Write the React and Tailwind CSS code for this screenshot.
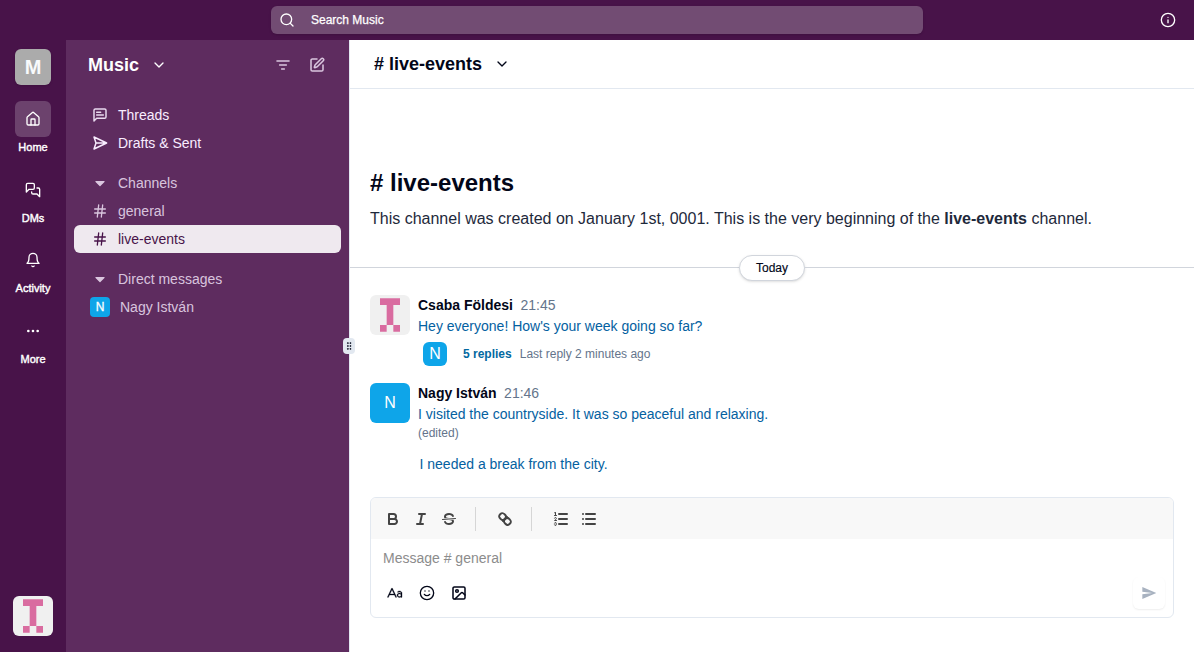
import React from "react";

const Icon = ({ children, className = "size-4", sw = 2 }) => (
  <svg viewBox="0 0 24 24" fill="none" stroke="currentColor" strokeWidth={sw} strokeLinecap="round" strokeLinejoin="round" className={`shrink-0 ${className}`}>
    {children}
  </svg>
);

const Chevron = ({ className }) => <Icon className={className}><path d="m6 9 6 6 6-6" /></Icon>;
const Hash = () => (
  <Icon><path d="M4 9h16M4 15h16M10 3 8 21M16 3l-2 18" /></Icon>
);
const Caret = () => (
  <svg viewBox="0 0 320 512" fill="currentColor" className="size-4 shrink-0">
    <path d="M31.3 192h257.3c17.8 0 26.7 21.5 14.1 34.1L174.1 354.8c-7.8 7.8-20.5 7.8-28.3 0L17.2 226.1C4.6 213.5 13.5 192 31.3 192z" />
  </svg>
);

const Identicon = () => (
  <svg viewBox="0 0 12 12" className="size-10 shrink-0 rounded-md bg-[#f0f0f0]" fill="#d96ca0">
    <path d="M3 1h6v2H7v6h2v2H7V9H5v2H3V9h2V3H3z" />
  </svg>
);

const QuillIcon = ({ children }) => (
  <span className="flex h-6 w-7 items-center justify-center">
    <svg viewBox="0 0 18 18" className="size-[18px]" fill="none" stroke="#444" strokeWidth="2" strokeLinecap="round" strokeLinejoin="round">
      {children}
    </svg>
  </span>
);

const railItems = [
  {
    label: "Home",
    active: true,
    icon: <Icon><path d="M15 21v-8a1 1 0 0 0-1-1h-4a1 1 0 0 0-1 1v8" /><path d="M3 10a2 2 0 0 1 .709-1.528l7-5.999a2 2 0 0 1 2.582 0l7 5.999A2 2 0 0 1 21 10v9a2 2 0 0 1-2 2H5a2 2 0 0 1-2-2z" /></Icon>,
  },
  {
    label: "DMs",
    icon: <Icon><path d="M14 9a2 2 0 0 1-2 2H6l-4 4V4a2 2 0 0 1 2-2h8a2 2 0 0 1 2 2z" /><path d="M18 9h2a2 2 0 0 1 2 2v11l-4-4h-6a2 2 0 0 1-2-2v-1" /></Icon>,
  },
  {
    label: "Activity",
    icon: <Icon><path d="M6 8a6 6 0 0 1 12 0c0 7 3 9 3 9H3s3-2 3-9" /><path d="M10.3 21a1.94 1.94 0 0 0 3.4 0" /></Icon>,
  },
  {
    label: "More",
    icon: <Icon><circle cx="12" cy="12" r="1" /><circle cx="19" cy="12" r="1" /><circle cx="5" cy="12" r="1" /></Icon>,
  },
];

function TopBar() {
  return (
    <header className="flex h-10 shrink-0 items-center bg-[#481349] text-white">
      <div className="w-[271px]" />
      <div className="flex h-7 w-[652px] items-center rounded-md bg-[#724c73] px-2 shadow-sm">
        <Icon className="mr-4 size-4"><circle cx="11" cy="11" r="8" /><path d="m21 21-4.3-4.3" /></Icon>
        <span className="text-xs [-webkit-text-stroke:0.25px_currentColor]">Search Music</span>
      </div>
      <div className="flex flex-1 justify-end pr-[18px]">
        <Icon><circle cx="12" cy="12" r="10" /><path d="M12 16v-4M12 8h.01" /></Icon>
      </div>
    </header>
  );
}

function Rail() {
  return (
    <aside className="flex w-[66px] shrink-0 flex-col items-center bg-[#481349] pt-[9px] pb-4 text-white">
      <div className="mb-4 flex size-9 items-center justify-center rounded-md bg-[#ababab] text-xl font-bold text-slate-50 shadow-sm">M</div>
      <nav className="flex flex-col gap-[16.5px]">
        {railItems.map((it) => (
          <div key={it.label} className="flex flex-col items-center gap-0.5">
            <div className={it.active ? "flex size-9 items-center justify-center rounded-md bg-[#6c426d]" : "flex size-9 items-center justify-center"}>{it.icon}</div>
            <span className="text-[11px] leading-4 [-webkit-text-stroke:0.4px_currentColor]">{it.label}</span>
          </div>
        ))}
      </nav>
      <div className="mt-auto"><Identicon /></div>
    </aside>
  );
}

const Row = ({ icon, children, className }) => (
  <div className={`flex h-7 items-center gap-2.5 rounded-md px-[18px] text-sm ${className}`}>
    {icon}
    <span>{children}</span>
  </div>
);

function Sidebar() {
  return (
    <aside className="flex w-[283px] shrink-0 flex-col bg-[#5e2c5f] px-2">
      <div className="flex h-[49px] items-center pl-[14px] pr-4 text-white">
        <span className="text-lg font-bold">Music</span>
        <Chevron className="ml-3 size-4" />
        <div className="ml-auto flex items-center gap-[18px] text-[#f9edffcc]">
          <Icon sw={2.4}><path d="M3 6h18M7 12h10M10 18h4" /></Icon>
          <Icon sw={2.3}><path d="M12 3H5a2 2 0 0 0-2 2v14a2 2 0 0 0 2 2h14a2 2 0 0 0 2-2v-7" /><path d="M18.375 2.625a1 1 0 0 1 3 3l-9.013 9.014a2 2 0 0 1-.853.505l-2.873.84a.5.5 0 0 1-.62-.62l.84-2.873a2 2 0 0 1 .506-.852z" /></Icon>
        </div>
      </div>
      <div className="mt-3 flex flex-col text-[#f9edff]">
        <Row icon={<Icon sw={2.2} className="size-4 opacity-90"><path d="M21 15a2 2 0 0 1-2 2H7l-4 4V5a2 2 0 0 1 2-2h14a2 2 0 0 1 2 2z" /><path d="M13 8H7M17 12H7" /></Icon>}>Threads</Row>
        <Row icon={<Icon sw={2.2}><path d="m3 3 3 9-3 9 19-9ZM6 12h16" /></Icon>}>Drafts &amp; Sent</Row>
      </div>
      <div className="mt-3 flex flex-col text-[#f9edffcc]">
        <Row icon={<Caret />}>Channels</Row>
        <Row icon={<Hash />}>general</Row>
        <Row icon={<Hash />} className="bg-[#efe9ef] text-[#481349]">live-events</Row>
      </div>
      <div className="mt-3 flex flex-col text-[#f9edffcc]">
        <Row icon={<Caret />}>Direct messages</Row>
        <div className="flex h-7 items-center gap-2.5 px-4 text-sm">
          <span className="flex size-5 items-center justify-center rounded bg-[#0ea5e9] text-xs text-white [-webkit-text-stroke:0.3px_currentColor]">N</span>
          <span>Nagy István</span>
        </div>
      </div>
    </aside>
  );
}

function ResizeHandle() {
  return (
    <div className="relative flex w-px shrink-0 items-center justify-center bg-slate-200">
      <div className="absolute -left-1.5 z-10 flex h-4 w-3 items-center justify-center rounded-sm bg-[#e2e8f0] text-slate-950">
        <Icon className="size-2.5"><circle cx="9" cy="12" r="1" /><circle cx="9" cy="5" r="1" /><circle cx="9" cy="19" r="1" /><circle cx="15" cy="12" r="1" /><circle cx="15" cy="5" r="1" /><circle cx="15" cy="19" r="1" /></Icon>
      </div>
    </div>
  );
}

function Messages() {
  return (
    <div className="flex flex-col">
      <div className="px-5 pt-[78px]">
        <h1 className="text-2xl font-bold">{"# live-events"}</h1>
        <p className="mt-2 text-base text-[#1e293b]">
          This channel was created on January 1st, 0001. This is the very beginning of the <strong>live-events</strong> channel.
        </p>
      </div>
      <div className="mt-6 flex items-center">
        <div className="mb-px h-px flex-1 bg-gray-300" />
        <span className="rounded-full border border-gray-300 bg-white px-4 py-1 text-xs shadow-sm [-webkit-text-stroke:0.15px_currentColor]">Today</span>
        <div className="mb-px h-px flex-1 bg-gray-300" />
      </div>
      <div className="mt-[14px] flex gap-2 px-5">
        <Identicon />
        <div>
          <div className="flex gap-[7.5px] text-sm">
            <span className="font-bold">Csaba Földesi</span>
            <span className="text-[#64748b]">21:45</span>
          </div>
          <p className="mt-px text-sm text-[#0461a1]">Hey everyone! How's your week going so far?</p>
          <div className="mt-1.5 ml-[5px] flex h-6 items-center text-xs">
            <span className="flex size-6 items-center justify-center rounded-md bg-[#0ea5e9] text-base text-white">N</span>
            <span className="ml-4 font-bold text-[#0369a1]">5 replies</span>
            <span className="ml-2 text-[#64748b]">Last reply 2 minutes ago</span>
          </div>
        </div>
      </div>
      <div className="mt-[17px] flex gap-2 px-5">
        <span className="flex size-10 items-center justify-center rounded-md bg-[#0ea5e9] pb-px text-base text-white">N</span>
        <div>
          <div className="flex gap-[7.5px] text-sm">
            <span className="font-bold">Nagy István</span>
            <span className="text-[#64748b]">21:46</span>
          </div>
          <p className="mt-px text-sm text-[#0461a1]">I visited the countryside. It was so peaceful and relaxing.</p>
          <p className="mt-px text-xs text-[#64748b]">(edited)</p>
          <p className="mt-[13px] pl-[1.5px] text-sm text-[#0461a1]">I needed a break from the city.</p>
        </div>
      </div>
    </div>
  );
}

function Composer() {
  return (
    <div className="mx-5 mb-[34px] mt-auto flex h-[121px] flex-col overflow-hidden rounded-md border border-slate-200 bg-white">
      <div className="flex h-[41px] items-center bg-[#f8f8f8] pl-2">
        <QuillIcon>
          <path d="M5,4H9.5A2.5,2.5,0,0,1,12,6.5v0A2.5,2.5,0,0,1,9.5,9H5V4Z" />
          <path d="M5,9h5.5A2.5,2.5,0,0,1,13,11.5v0A2.5,2.5,0,0,1,10.5,14H5V9Z" />
        </QuillIcon>
        <QuillIcon><path d="M7 4h6M5 14h6M8 14 10 4" /></QuillIcon>
        <QuillIcon>
          <path d="M15.5 8.5 2.5 9.5" strokeWidth="1" />
          <g fill="#444" stroke="none">
            <path d="M9.007,8C6.542,7.791,6,7.519,6,6.5,6,5.792,7.283,5,9,5c1.571,0,2.765.679,2.969,1.309a1,1,0,0,0,1.9-.617C13.356,4.106,11.354,3,9,3,6.2,3,4,4.538,4,6.5a3.2,3.2,0,0,0,.5,1.843Z" />
            <path d="M8.984,10C11.457,10.208,12,10.479,12,11.5c0,.708-1.283,1.5-3,1.5-1.571,0-2.765-.679-2.969-1.309a1,1,0,1,0-1.9.617C4.644,13.894,6.646,15,9,15c2.8,0,5-1.538,5-3.5a3.2,3.2,0,0,0-.5-1.843Z" />
          </g>
        </QuillIcon>
        <div className="ml-3 mr-[15px] h-6 w-px bg-[#d6d6d6]" />
        <QuillIcon>
          <path d="M7 11 11 7" />
          <path d="M8.9,4.577a3.476,3.476,0,0,1,.36,4.679A3.476,3.476,0,0,1,4.577,8.9C3.185,7.5,2.035,6.4,4.217,4.217S7.5,3.185,8.9,4.577Z" />
          <path d="M13.423,9.1a3.476,3.476,0,0,0-4.679-.36,3.476,3.476,0,0,0,.36,4.679c1.392,1.392,2.5,2.542,4.679.36S14.815,10.5,13.423,9.1Z" />
        </QuillIcon>
        <div className="ml-3 mr-[15px] h-6 w-px bg-[#d6d6d6]" />
        <QuillIcon>
          <path d="M7 4h8M7 9h8M7 14h8" />
          <path d="M2.5 5.5h2" strokeWidth="1" />
          <path fill="#444" stroke="none" d="M3.5,6A0.5,0.5,0,0,1,3,5.5V3.085l-0.276.138A0.5,0.5,0,0,1,2.053,3c-0.124-.247-0.023-0.324.224-0.447l1-.5A0.5,0.5,0,0,1,4,2.5v3A0.5,0.5,0,0,1,3.5,6Z" />
          <path strokeWidth="1" d="M4.5,10.5h-2c0-.234,1.85-1.076,1.85-2.234A0.959,0.959,0,0,0,2.5,8.156" />
          <path strokeWidth="1" d="M2.5,14.846a0.959,0.959,0,0,0,1.85-.109A0.7,0.7,0,0,0,3.75,14a0.688,0.688,0,0,0,.6-0.736,0.959,0.959,0,0,0-1.85-.109" />
        </QuillIcon>
        <QuillIcon><path d="M6 4h9M6 9h9M6 14h9M3 4h0M3 9h0M3 14h0" /></QuillIcon>
      </div>
      <div className="px-3 pt-[9px] text-sm text-[#8c8c8c]">{"Message # general"}</div>
      <div className="flex h-8 mt-[9px] items-center gap-4 pl-4 pr-2">
        <svg viewBox="0 0 256 256" fill="currentColor" stroke="currentColor" strokeWidth="5" className="size-4">
          <path d="M87.24,52.59a8,8,0,0,0-14.48,0l-64,136a8,8,0,1,0,14.48,6.81L39.9,160h80.2l16.66,35.4a8,8,0,1,0,14.48-6.81ZM47.43,144,80,74.79,112.57,144ZM200,96c-12.76,0-22.73,3.47-29.63,10.32a8,8,0,0,0,11.26,11.36c3.8-3.77,10-5.68,18.37-5.68,13.23,0,24,9,24,20v3.22A42.76,42.76,0,0,0,200,128c-22.06,0-40,16.15-40,36s17.94,36,40,36a42.73,42.73,0,0,0,24-7.25,8,8,0,0,0,16-.75V132C240,112.15,222.06,96,200,96Zm0,88c-13.23,0-24-9-24-20s10.77-20,24-20,24,9,24,20S213.23,184,200,184Z" />
        </svg>
        <Icon><circle cx="12" cy="12" r="10" /><path d="M8 14s1.500 2 4 2 4-2 4-2M9 9h.01M15 9h.01" /></Icon>
        <Icon sw={2.3}><rect width="18" height="18" x="3" y="3" rx="2" /><circle cx="9" cy="9" r="2" /><path d="m21 15-3.086-3.086a2 2 0 0 0-2.828 0L6 21" /></Icon>
        <div className="ml-auto flex size-8 items-center justify-center rounded-md bg-white text-[#a8b2c0] shadow-[0_1px_2px_0_rgb(0_0_0/0.07)]">
          <svg viewBox="0 0 24 24" fill="currentColor" className="size-4"><path d="M2.01 21 23 12 2.01 3 2 10l15 2-15 2z" /></svg>
        </div>
      </div>
    </div>
  );
}

export default function App() {
  return (
    <div className="flex h-screen w-full flex-col overflow-hidden bg-white font-['Liberation_Sans',Arial,sans-serif] text-slate-950">
      <TopBar />
      <div className="flex min-h-0 flex-1">
        <Rail />
        <Sidebar />
        <ResizeHandle />
        <main className="flex min-w-0 flex-1 flex-col">
          <div className="flex h-[49px] shrink-0 items-center border-b border-slate-200 px-6">
            <span className="text-lg font-bold">{"# live-events"}</span>
            <Chevron className="ml-3 size-4" />
          </div>
          <Messages />
          <Composer />
        </main>
      </div>
    </div>
  );
}
